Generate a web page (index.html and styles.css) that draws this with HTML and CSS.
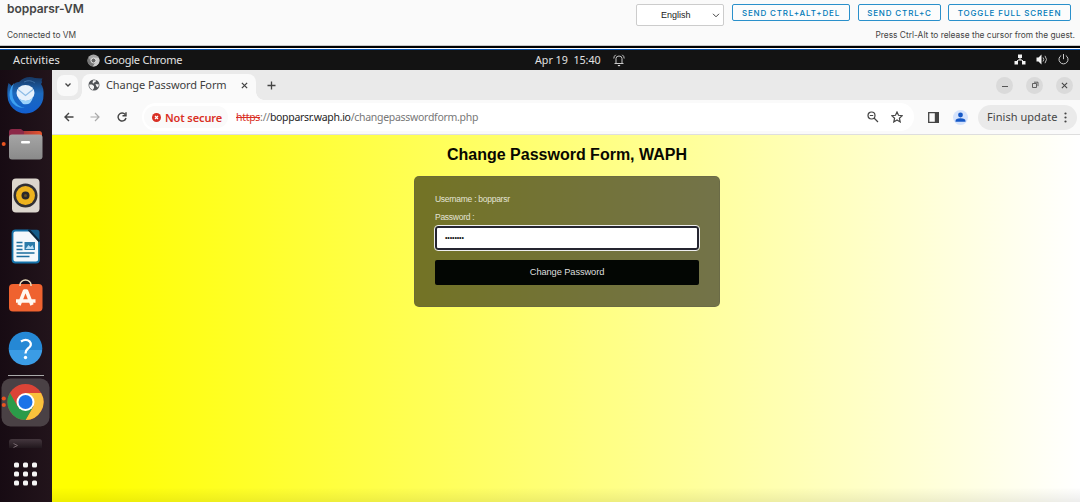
FILE: index.html
```
<!DOCTYPE html>
<html lang="en">
<head>
<meta charset="utf-8">
<title>bopparsr-VM</title>
<link rel="stylesheet" href="styles.css">
</head>
<body>
<header class="console">
  <div class="console-left">
    <h1 class="vm-name">bopparsr-VM</h1>
    <span class="vm-status">Connected to VM</span>
  </div>
  <div class="console-right">
    <div class="console-actions">
      <div class="language"><span>English</span><svg width="8" height="5" viewBox="0 0 8 5"><path d="M1 .8 4 3.8 7 .8" fill="none" stroke="#444"/></svg></div>
      <button class="action cad">SEND CTRL+ALT+DEL</button>
      <button class="action cc">SEND CTRL+C</button>
      <button class="action full">TOGGLE FULL SCREEN</button>
    </div>
    <span class="hint">Press Ctrl-Alt to release the cursor from the guest.</span>
  </div>
</header>
<div class="divider"></div>
<div class="topbar">
  <span class="activities">Activities</span>
  <svg class="app-icon" width="13" height="13" viewBox="0 0 13 13"><circle cx="6.5" cy="6.5" r="6" fill="#a6a6a6"/><path d="M1.3 3.5A6 6 0 0 0 6 12.5L8.5 8 4 7Z" fill="#777"/><path d="M6.5 3.8h5.3A6 6 0 0 1 6 12.5L9 7Z" fill="#ccc"/><circle cx="6.5" cy="6.5" r="2.5" fill="#666" stroke="#e5e5e5"/></svg>
  <span class="app-name">Google Chrome</span>
  <span class="clock">Apr 19&nbsp; 15:40</span>
  <svg class="bell" width="12" height="13" viewBox="0 0 12 13"><path d="M1.500 9.500h9M3 9.500V4.500Q3 2 6 2t3 2.500v5M.8 4.500Q.8 2 2.800.8M11.200 4.500Q11.200 2 9.200.8" fill="none" stroke="#c8c8c8" stroke-width="1"/><path d="M4.500 11h3L6 12.500Z" fill="#eee"/></svg>
  <div class="tray">
    <svg width="12" height="11" viewBox="0 0 12 11"><path d="M4 .5h4v3.500H4ZM.5 7H4v3.500H.5ZM8 7h3.500v3.500H8Z" fill="#f2f2f2"/><path d="M6 3v3M2.300 8 4 6h4l1.700 2" fill="none" stroke="#f2f2f2"/></svg>
    <svg width="12" height="11" viewBox="0 0 12 11"><path d="M.5 3.500h2L5.500.5v10L2.500 7.500h-2Z" fill="#f2f2f2"/><path d="M7 3.500q1.600 2 0 4M9 1.800q3 3.700 0 7.400" fill="none" stroke="#bbb"/></svg>
    <svg width="11" height="11" viewBox="0 0 11 11"><path d="M3.200 1.500a4.500 4.500 0 1 0 4.600 0M5.500 0v5.200" fill="none" stroke="#ccc"/></svg>
  </div>
</div>
<div class="desktop">
  <nav class="dock">
    <svg width="52" height="49" viewBox="0 0 52 49">
      <defs><linearGradient id="bird" x2="0" y2="1"><stop offset="0" stop-color="#173762"/><stop offset=".45" stop-color="#1c69bd"/><stop offset="1" stop-color="#125fd0"/></linearGradient></defs>
      <path d="M8.500 13 12 16Q15 12 19 12 26 5 35 8L42.500 8.500Q41 10 42 12.500L41 14Q44 18 43.500 25A18 18 0 0 1 7.500 26Q7 18 8.500 13Z" fill="url(#bird)"/>
      <path d="M14 13Q11 20 13 28 16 36 25 38 14 38 10 29 8 20 14 13Z" fill="#3ca0f0"/>
      <ellipse cx="25.500" cy="23" rx="9" ry="8" fill="#e6f1fc"/><path d="m18 19.500 7.500 6 7.500-6" fill="none" stroke="#8dbce6" stroke-width="1.300"/><path d="M18 28q9 6 15-1-2 9-10 7Z" fill="#9bd3fc"/>
      <path d="M24 12q6-3 11 1" fill="none" stroke="#3c6ea6"/>
    </svg>
    <svg width="52" height="51" viewBox="0 0 52 51">
      <defs><linearGradient id="folder"><stop offset="0" stop-color="#7a2145"/><stop offset="1" stop-color="#e7552d"/></linearGradient><linearGradient id="folderFront" x2="0" y2="1"><stop offset="0" stop-color="#a5a5a5"/><stop offset="1" stop-color="#8a8a8a"/></linearGradient></defs>
      <rect x="9" y="12" width="33" height="18" rx="3" fill="url(#folder)"/><path d="M9 17v-4q0-3 3-3h9l3 2.500v3Z" fill="#8c2948"/><rect x="9" y="15.500" width="33.500" height="25" rx="3" fill="url(#folderFront)"/><rect x="21" y="22" width="9" height="2.500" rx="1" fill="#fff"/><circle cx="3.700" cy="25" r="2" fill="#e95420"/>
    </svg>
    <svg width="52" height="51" viewBox="0 0 52 51">
      <rect x="12" y="8.500" width="27.500" height="34" rx="4" fill="#dcd6cd"/><circle cx="25.500" cy="25.500" r="12" fill="#302f33"/><circle cx="25.500" cy="25.500" r="9.500" fill="#edb31e"/><circle cx="25.500" cy="25.500" r="4" fill="#29282b"/><circle cx="25.500" cy="25.500" r="1.500" fill="#69521e"/>
    </svg>
    <svg width="52" height="51" viewBox="0 0 52 51">
      <path d="M15.500 9.500h14l9.500 10v19q0 3-3 3H15.500q-3 0-3-3v-26q0-3 3-3Z" fill="#f3f8fb" stroke="#1573ab" stroke-width="1.800"/><path d="M29 8.700h8q2.500 0 2.500 2.500v9Z" fill="#145d8a"/><path d="M28.500 8.500 39.500 20.500" stroke="#0a263d" stroke-width="2"/><path d="M16.500 21.500h6M16.500 25h6M16.500 28.500h6M16.500 32h18M16.500 35.500h13" stroke="#1b6e9e" stroke-width="1.300"/><rect x="24.500" y="21" width="10.500" height="8" fill="#2b7ba9"/><path d="m25.500 28 3-4 2 2 2-2 1.500 4Z" fill="#bce0f5"/>
    </svg>
    <svg width="52" height="51" viewBox="0 0 52 51">
      <rect x="9" y="12" width="33.500" height="27.500" rx="4" fill="#ef622f"/><path d="M20 14v-1a5.500 5 0 0 1 11 0v1" fill="none" stroke="#eadbbb" stroke-width="1.500"/><path d="m19 33 5.500-14h2L32 33M16 29h19.500" fill="none" stroke="#fff8f0" stroke-width="3.500" stroke-linejoin="round"/>
    </svg>
    <svg width="52" height="51" viewBox="0 0 52 51"><defs><linearGradient id="help" x2="0" y2="1"><stop offset=".55" stop-color="#2588d5"/><stop offset=".55" stop-color="#3b9ce5"/></linearGradient></defs><circle cx="25.500" cy="25.500" r="16.800" fill="url(#help)"/><path d="M21 18.500q5-3 8.500-.2 3.300 3.700-1.500 7.200-2.500 2-2.500 5" fill="none" stroke="#fff" stroke-width="2.300"/><circle cx="25.500" cy="34.500" r="1.700" fill="#fff"/></svg>
    <div class="dock-line"></div>
    <svg width="52" height="49" viewBox="0 0 52 49"><rect x="1.500" y=".5" width="48" height="48" rx="9" fill="#4a4145"/><g transform="translate(25.500 24)"><circle r="18" fill="#db4437"/><path d="M0-9H15.600A18 18 0 0 1 0 18L7.800 4.500Z" fill="#f9c23c"/><path d="M-15.600-9A18 18 0 0 0 0 18L7.800 4.500-7.800 4.500Z" fill="#2b9b49"/><circle r="9" fill="#fff"/><circle r="7" fill="#1a73e8"/></g><circle cx="3.800" cy="20.500" r="2.100" fill="#e95420"/><circle cx="3.800" cy="27" r="2.100" fill="#e95420"/></svg>
    <svg class="terminal" width="52" height="10" viewBox="0 0 52 10"><defs><linearGradient id="term" x2="0" y2="1"><stop offset="0" stop-color="#44373e"/><stop offset="1" stop-color="#21171d"/></linearGradient></defs><path d="M9 9V3q0-3 3-3h27q3 0 3 3v6Z" fill="url(#term)"/><path d="m13.500 4.500 4 2-4 2" fill="none" stroke="#77686f"/></svg>
    <svg class="apps" width="52" height="26" viewBox="0 0 52 26"><g fill="#f5f5f5"><rect x="14" y="1.500" width="5" height="5" rx="1.500"/><rect x="23" y="1.500" width="5" height="5" rx="1.500"/><rect x="32" y="1.500" width="5" height="5" rx="1.500"/><rect x="14" y="10.500" width="5" height="5" rx="1.500"/><rect x="23" y="10.500" width="5" height="5" rx="1.500"/><rect x="32" y="10.500" width="5" height="5" rx="1.500"/><rect x="14" y="19.500" width="5" height="5" rx="1.500"/><rect x="23" y="19.500" width="5" height="5" rx="1.500"/><rect x="32" y="19.500" width="5" height="5" rx="1.500"/></g></svg>
  </nav>
  <section class="browser">
    <div class="tabs">
      <div class="tab-search"><svg width="8" height="6" viewBox="0 0 8 6"><path d="m1.500 1.500 2.500 2.500 2.500-2.500" fill="none" stroke="#444" stroke-width="1.300"/></svg></div>
      <div class="tab">
        <svg width="12" height="12" viewBox="0 0 12 12"><circle cx="6" cy="6" r="5.500" fill="#505357"/><path d="M2 5.500h2l2 1.500v2L4.700 11Q1 9 1.200 5.500ZM5 1.200h3L7.500 3 6 3.500v1L4.500 4ZM7.500 5l3.500.5-1 3-1.500-1Z" fill="#f4f4f4"/></svg>
        <span class="tab-title">Change Password Form</span>
        <svg class="tab-close" width="7" height="7" viewBox="0 0 8 8"><path d="m1 1 6 6M7 1 1 7" stroke="#444" stroke-width="1.500"/></svg>
      </div>
      <svg class="new-tab" width="9" height="9" viewBox="0 0 9 9"><path d="M4.500.5v8M.5 4.500h8" stroke="#444" stroke-width="1.300"/></svg>
      <div class="window-buttons">
        <span><svg width="8" height="8" viewBox="0 0 8 8"><path d="M1 5.500h6" stroke="#555"/></svg></span>
        <span><svg width="8" height="8" viewBox="0 0 8 8"><path d="M1.500 2.500h4v4h-4ZM3 1.200h4v4" fill="none" stroke="#555" stroke-width=".9"/></svg></span>
        <span><svg width="7" height="7" viewBox="0 0 8 8"><path d="m1 1 6 6M7 1 1 7" stroke="#444" stroke-width="1.200"/></svg></span>
      </div>
    </div>
    <div class="toolbar">
      <svg width="10" height="10" viewBox="0 0 10 10"><path d="M9.500 5H1M5 1 1 5l4 4" fill="none" stroke="#444" stroke-width="1.400"/></svg>
      <svg class="forward" width="10" height="10" viewBox="0 0 10 10"><path d="M.5 5H9M5 1l4 4-4 4" fill="none" stroke="#aaa" stroke-width="1.200"/></svg>
      <svg class="reload" width="10" height="10" viewBox="0 0 10 10"><path d="M8.200 2.500A4 4 0 1 0 9 6M9 .3v3.500H5.500" fill="none" stroke="#444" stroke-width="1.400"/></svg>
      <div class="address">
        <span class="security"><svg width="9" height="9" viewBox="0 0 9 9"><circle cx="4.500" cy="4.500" r="4.500" fill="#d93025"/><path d="m3 3 3 3M6 3 3 6" stroke="#fff" stroke-width="1.200"/></svg><b>Not secure</b></span>
        <span class="url"><s>https</s><i>://</i>bopparsr.waph.io<i>/changepasswordform.php</i></span>
        <svg class="magnify" width="12" height="12" viewBox="0 0 12 12"><circle cx="4.500" cy="4.500" r="3.500" fill="none" stroke="#444" stroke-width="1.200"/><path d="M2.800 4.500h3.400M7 7l4 4" stroke="#444" stroke-width="1.200"/></svg>
        <svg width="12" height="12" viewBox="0 0 12 12"><path d="m6 1 1.500 3.300 3.700.4-2.800 2.500.8 3.700L6 9l-3.200 1.900.8-3.700L.8 4.700l3.700-.4Z" fill="none" stroke="#444" stroke-width="1.200"/></svg>
      </div>
      <svg class="panel" width="11" height="11" viewBox="0 0 11 11"><path d="M.7.7h9.600v9.600H.7Z" fill="none" stroke="#444" stroke-width="1.300"/><path d="M6.800 0H11v11H6.800Z" fill="#444"/></svg>
      <svg class="profile" width="15" height="15" viewBox="0 0 15 15"><circle cx="7.500" cy="7.500" r="7.500" fill="#d5e3fc"/><circle cx="7.500" cy="5" r="2.400" fill="#1558c7"/><path d="M2.500 11.800V11q0-2.800 5-2.800t5 2.800v.8Z" fill="#1558c7"/></svg>
      <div class="update"><span>Finish update</span><svg width="3" height="11" viewBox="0 0 3 11"><g fill="#444"><circle cx="1.500" cy="1.500" r="1.100"/><circle cx="1.500" cy="5.500" r="1.100"/><circle cx="1.500" cy="9.500" r="1.100"/></g></svg></div>
    </div>
    <main class="page">
      <h2>Change Password Form, WAPH</h2>
      <form class="card">
        <p>Username : bopparsr</p>
        <p class="password-label">Password :</p>
        <div class="field">••••••••</div>
        <button type="button" class="submit">Change Password</button>
      </form>
    </main>
  </section>
</div>
</body>
</html>
```
FILE: styles.css
```
* { box-sizing: border-box; }
body { margin: 0; width: 1080px; height: 502px; overflow: hidden; background: #fafafa; font-family: "Noto Sans", sans-serif; }
svg { display: block; flex: none; }
span, b { white-space: nowrap; }
.console { height: 46px; display: flex; justify-content: space-between; border-bottom: 1px solid #c8c8c8; font-family: Inter, sans-serif; color: #454545; }
.console-left { padding: 1px 0 0 7px; }
.vm-name { margin: 0; font-size: 12px; line-height: 16px; font-weight: 600; letter-spacing: -.05px; }
.vm-status { display: block; margin-top: 13px; font-size: 8.4px; line-height: 10px; }
.console-right { padding: 3px 5px 0 0; }
.console-actions { display: flex; align-items: flex-start; justify-content: flex-end; height: 27px; padding-right: 4px; }
.language { width: 88px; height: 22px; margin: 1px 8px 0 0; padding: 0 3px 0 24px; display: flex; align-items: center; justify-content: space-between; border: 1px solid #ccc; border-radius: 2px; background: #fff; font: 9px "Liberation Sans", sans-serif; color: #222; }
.action { height: 17px; margin-top: 1px; padding: 0; border: 1px solid #2a90cb; border-radius: 2px; background: #fcfcfc; color: #0079b8; font: 500 8px Inter, sans-serif; letter-spacing: .85px; white-space: nowrap; }
.cad { width: 118px; margin-right: 8px; }
.cc { width: 83px; margin-right: 7px; }
.full { width: 123px; }
.hint { display: block; text-align: right; font-size: 8.4px; line-height: 10px; }
.divider { height: 4px; background: linear-gradient(#000 0 2px, #fff 2px 3px, #0755b5 3px); }
.topbar { height: 20px; display: flex; align-items: center; background: #131313; color: #e2e2e2; font-size: 11px; line-height: 20px; }
.activities { width: 74px; margin-left: 13px; letter-spacing: .1px; }
.app-name { width: 430px; margin-left: 4px; letter-spacing: -.22px; }
.clock { width: 79px; margin-top: -1px; margin-left: 1px; font-size: 10.7px; }
.bell { margin-left: -1px; }
.tray { display: flex; align-items: center; gap: 10px; margin: -2px 11px 0 auto; }
.desktop { height: 432px; display: flex; }
.dock { width: 52px; background: linear-gradient(90deg, #170b13, #22141b); display: flex; flex-direction: column; overflow: hidden; }
.dock-line { height: 1px; margin: 1px 8px 2px; background: #aaa; flex: none; }
.terminal { margin-top: 12px; }
.apps { margin-top: 12px; }
.browser { flex: 1; display: flex; flex-direction: column; }
.tabs { height: 30px; display: flex; align-items: center; background: #eaeaea; }
.tab-search { width: 21px; height: 21px; margin-left: 5px; border-radius: 7px; background: #f9f9f9; display: flex; align-items: center; justify-content: center; }
.tab { position: relative; width: 174px; height: 26px; align-self: flex-end; margin-left: 4px; padding: 0 8px 4px 6px; border-radius: 8px 8px 0 0; background: #fafafa; display: flex; align-items: center; color: #3e3e3e; }
.tab::before, .tab::after { content: ""; position: absolute; bottom: 0; width: 8px; height: 8px; }
.tab::before { left: -8px; background: radial-gradient(circle at 0 0, transparent 7.5px, #fafafa 8px); }
.tab::after { right: -8px; background: radial-gradient(circle at 100% 0, transparent 7.5px, #fafafa 8px); }
.tab-title { margin: -2px 0 0 6px; font-size: 11px; letter-spacing: -.09px; }
.tab-close { margin-left: auto; }
.new-tab { margin-left: 11px; }
.window-buttons { margin: 0 7px 0 auto; display: flex; gap: 13px; }
.window-buttons span { width: 17px; height: 17px; border-radius: 50%; display: grid; place-items: center; background: #dadada; }
.toolbar { height: 35px; padding: 0 3px 0 12px; display: flex; align-items: center; border-bottom: 1px solid #dedede; background: #fafafa; }
.forward { margin-left: 16px; }
.reload { margin-left: 17px; }
.address { width: 772px; height: 28px; margin-left: 15px; padding-left: 2px; border-radius: 14px; display: flex; align-items: center; background: #fff; }
.security { width: 84px; height: 22px; padding-left: 8px; display: flex; align-items: center; gap: 4px; border-radius: 11px; background: #fafafa; color: #d93025; font-size: 11px; }
.security b { font-weight: 600; letter-spacing: -.12px; }
.url { margin-left: 8px; color: #252525; font-size: 10.5px; letter-spacing: -.29px; }
.url i { color: #777; font-style: normal; }
.url s { color: #d93025; }
.magnify { margin: 0 12px 0 auto; }
.address svg:last-child { margin-right: 11px; }
.panel { margin-left: 14px; }
.profile { margin-left: 14px; }
.update { width: 99px; height: 25px; margin-left: auto; padding: 0 10px 0 9px; border-radius: 13px; display: flex; align-items: center; justify-content: space-between; background: #eaeaea; color: #464646; font-size: 11px; }
.update span { margin-top: -1px; letter-spacing: .05px; }
.page { flex: 1; padding-left: 2px; display: flex; flex-direction: column; align-items: center; background: linear-gradient(transparent 96%, rgba(0,0,0,.07)), linear-gradient(90deg, #ff0 4%, #fff); font-family: "Liberation Sans", sans-serif; }
h2 { margin: 10px 0 12px; font-size: 16px; line-height: 19px; color: #080800; }
.card { width: 306px; height: 131px; padding: 17px 20px 0 20px; border: 1px solid rgba(100,100,70,.5); border-radius: 5px; background: rgba(0,0,0,.55); color: #e3e3d5; font-size: 8.5px; letter-spacing: -.27px; }
.card p { margin: 0; height: 18px; line-height: 11px; }
.card .password-label { height: 15px; }
.field { height: 24px; margin-top: -1px; padding-left: 8px; border: 2px solid #252530; outline: 1px solid #eee; border-radius: 3px; background: #fff; color: #111; line-height: 20px; font-size: 7px; letter-spacing: -.1px; }
.submit { display: block; width: 100%; height: 25px; margin-top: 10px; padding: 0 0 2px; border: 0; border-radius: 2px; background: #030603; color: #dedede; font: 9.3px "Liberation Sans", sans-serif; letter-spacing: -.1px; }
```
